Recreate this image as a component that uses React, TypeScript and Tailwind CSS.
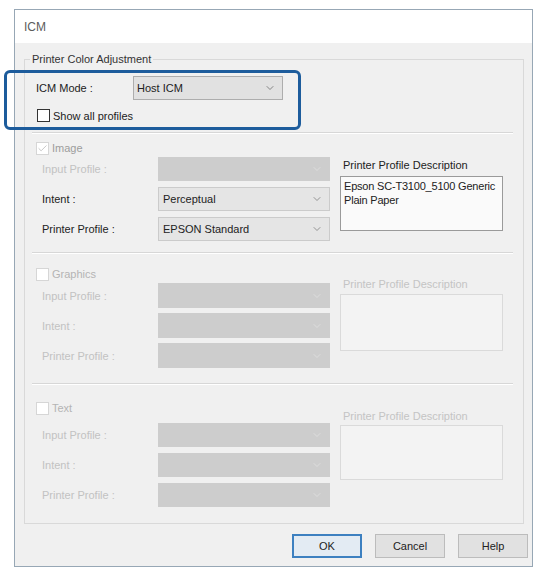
import { ChevronDown, Check } from 'lucide-react';

const font = { fontFamily: '"Liberation Sans", Arial, sans-serif' };

type Mode = 'on' | 'off' | 'locked';

const Dropdown = ({
  value,
  mode,
  width,
  height,
}: {
  value?: string;
  mode: Mode;
  width: string;
  height: string;
}) => {
  const tone =
    mode === 'locked'
      ? 'bg-[#cdcdcd] border-[#cdcdcd]'
      : 'bg-[#e5e5e5] border-[#cbcbcb]';
  return (
    <div
      className={`flex items-center justify-between border pl-[4px] pr-[6px] ${tone} ${width} ${height}`}
    >
      <span className="text-[#222]">{value}</span>
      <ChevronDown
        size={12}
        strokeWidth={1.5}
        className={mode === 'locked' ? 'text-[#e2e2e2]' : 'text-[#777]'}
      />
    </div>
  );
};

const Checkbox = ({ checked, dim }: { checked?: boolean; dim?: boolean }) => (
  <div
    className={`flex h-[13px] w-[13px] items-center justify-center border ${
      dim ? 'border-[#d6d6d6] bg-white' : 'border-[#333] bg-white'
    }`}
  >
    {checked && <Check size={11} strokeWidth={2} className="text-[#c2c2c2]" />}
  </div>
);

const Separator = ({ top }: { top: string }) => (
  <div
    className={`ml-[7px] mr-[10px] h-[2px] border-t border-b border-t-[#d7d7d7] border-b-white ${top}`}
  />
);

type SectionProps = {
  title: string;
  enabled?: boolean;
  checked?: boolean;
  headerTop: string;
  rowsTop: string;
  rowHeight: string;
  rowGap: string;
  descTop: string;
  boxTop: string;
  boxHeight: string;
  intent?: string;
  profile?: string;
  desc?: string[];
};

const Section = (p: SectionProps) => {
  const rows = [
    { label: 'Input Profile :', value: undefined, locked: true },
    { label: 'Intent :', value: p.intent, locked: !p.enabled },
    { label: 'Printer Profile :', value: p.profile, locked: !p.enabled },
  ];
  return (
    <div className="flex">
      <div className={`ml-[11px] w-[294px] ${p.headerTop}`}>
        <div className="flex h-[14px] items-center">
          <Checkbox checked={p.checked} dim />
          <span
            className={`ml-[3px] ${p.enabled ? 'text-[#9d9d9d]' : 'text-[#b4b4b4]'}`}
          >
            {p.title}
          </span>
        </div>
        <div className={`flex flex-col ${p.rowsTop} ${p.rowGap}`}>
          {rows.map((r) => (
            <div key={r.label} className="flex items-center pl-[6px]">
              <span
                className={`w-[116px] ${
                  p.enabled && !r.locked ? 'text-[#222]' : 'text-[#c2c2c2]'
                }`}
              >
                {r.label}
              </span>
              <Dropdown
                value={r.value}
                mode={r.locked ? 'locked' : 'on'}
                width="w-[172px]"
                height={p.rowHeight}
              />
            </div>
          ))}
        </div>
      </div>
      <div className={`ml-[10px] w-[163px] ${p.descTop}`}>
        <div
          className={`h-[14px] pl-[3px] leading-[14px] ${
            p.enabled ? 'text-[#222]' : 'text-[#c4c4c4]'
          }`}
        >
          Printer Profile Description
        </div>
        <div
          className={`border px-[3px] pt-[2px] leading-[14px] ${p.boxTop} ${p.boxHeight} ${
            p.enabled
              ? 'border-[#9a9a9a] bg-[#fafafa] text-[#222]'
              : 'border-[#dadada] bg-[#f3f3f3]'
          }`}
        >
          {p.desc?.map((line) => (
            <div key={line} className="whitespace-nowrap tracking-[-0.2px]">
              {line}
            </div>
          ))}
        </div>
      </div>
    </div>
  );
};

const Button = ({ label, primary }: { label: string; primary?: boolean }) => (
  <div
    className={`flex h-[24px] w-[70px] items-center justify-center ${
      primary
        ? 'border-2 border-[#3d80c0] bg-[#e3ebf3]'
        : 'border border-[#bcbcbc] bg-[#e1e1e1]'
    } text-[#222]`}
  >
    {label}
  </div>
);

export default function App() {
  return (
    <div
      className="relative h-[567px] w-[534px] overflow-hidden bg-white pl-[14px] pt-[9px] text-[11px] leading-[14px]"
      style={font}
    >
      <div className="flex h-[558px] w-[519px] flex-col border border-[#97a7b5]">
        <div className="flex h-[33px] items-center bg-white pl-[9px] text-[12px] text-[#5c5c5c]">
          ICM
        </div>
        <div className="flex flex-1 flex-col bg-[#f0f0f0]">
          <fieldset className="ml-[9px] mr-[8px] mt-[9px] border border-[#d9d9d9] p-0 pb-[16px]">
            <legend className="ml-[5px] px-[2px] leading-[15px] text-[#333]">
              Printer Color Adjustment
            </legend>
            <div className="ml-[11px] mt-[9px] flex h-[24px] items-center">
              <span className="w-[97px] text-[#222]">ICM Mode :</span>
              <div className="flex h-[24px] w-[150px] items-center justify-between border border-[#adadad] bg-[#e1e1e1] pl-[3px] pr-[6px] text-[#222]">
                <span>Host ICM</span>
                <ChevronDown size={12} strokeWidth={1.5} className="text-[#666]" />
              </div>
            </div>
            <div className="ml-[12px] mt-[8px] flex h-[15px] items-center">
              <Checkbox />
              <span className="ml-[3px] text-[#222]">Show all profiles</span>
            </div>
            <Separator top="mt-[9px]" />
            <Section
              title="Image"
              enabled
              checked
              headerTop="pt-[7px]"
              rowsTop="mt-[2px]"
              rowHeight="h-[24px]"
              rowGap="gap-[6px]"
              descTop="pt-[24px]"
              boxTop="mt-[4px]"
              boxHeight="h-[55px]"
              intent="Perceptual"
              profile="EPSON Standard"
              desc={['Epson SC-T3100_5100 Generic', 'Plain Paper']}
            />
            <Separator top="mt-[11px]" />
            <Section
              title="Graphics"
              headerTop="pt-[13px]"
              rowsTop="mt-[2px]"
              rowHeight="h-[25px]"
              rowGap="gap-[5px]"
              descTop="pt-[23px]"
              boxTop="mt-[3px]"
              boxHeight="h-[57px]"
            />
            <Separator top="mt-[15px]" />
            <Section
              title="Text"
              headerTop="pt-[16px]"
              rowsTop="mt-[8px]"
              rowHeight="h-[24px]"
              rowGap="gap-[6px]"
              descTop="pt-[24px]"
              boxTop="mt-[2px]"
              boxHeight="h-[55px]"
            />
          </fieldset>
          <div className="mr-[4px] mt-[10px] flex justify-end gap-[13px]">
            <Button label="OK" primary />
            <Button label="Cancel" />
            <Button label="Help" />
          </div>
        </div>
      </div>
      <div className="absolute left-[4px] top-[70px] h-[60px] w-[297px] rounded-[6px] border-[3px] border-[#1d5c9c]" />
    </div>
  );
}
